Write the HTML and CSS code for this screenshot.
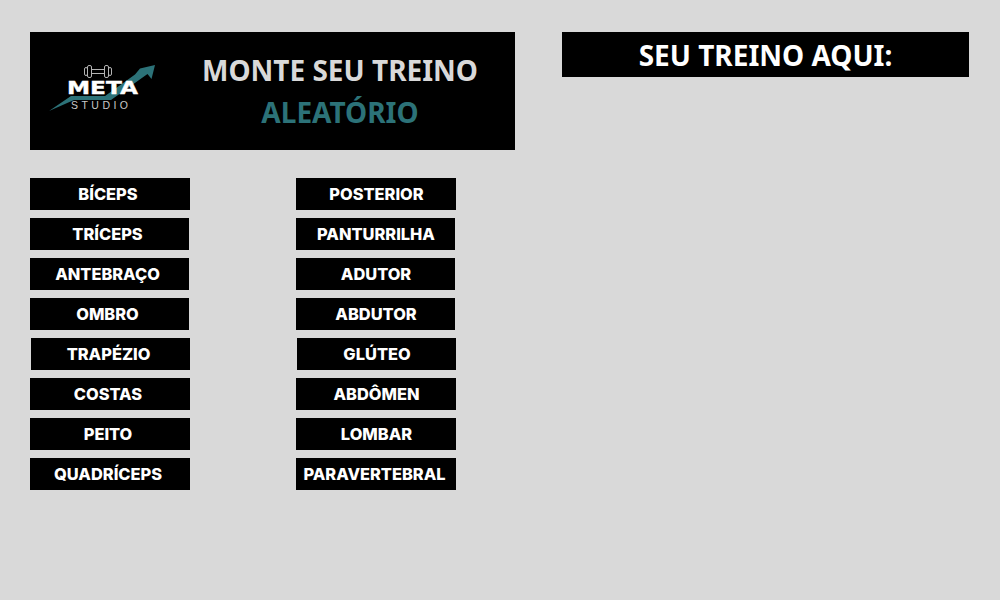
FILE: index.html
```html
<!DOCTYPE html>
<html lang="en">
<head>
    <meta charset="utf-8">
    <meta name="viewport" content="width=device-width, initial-scale=1">
    <title>Monte seu treino</title>
    <link rel="stylesheet" href="styles.css">
</head>
<body>

<div id="page">
    <div id="left">
        <div id="banner">
            <svg id="logo" width="120" height="60" viewBox="0 0 120 60">
                <g fill="none" stroke="#b4b4b4" stroke-width="1">
                    <rect x="35.5" y="6.5" width="3" height="8" rx="1.5"/>
                    <rect x="38.5" y="4.5" width="4" height="12" rx="1.5"/>
                    <rect x="55.5" y="4.5" width="4" height="12" rx="1.5"/>
                    <rect x="59.5" y="6.5" width="3" height="8" rx="1.5"/>
                    <path d="M42.5 8.5h13M42.5 12.5h13"/>
                </g>
                <path d="M0 50 L22 35 L56 35 L86 13.5 L91 7.5 L106 4 L102.5 18 L98.5 13 L62 39 L25 39 Z" fill="#2c7278"/>
                <text x="18" y="33" class="logo-meta" textLength="71" lengthAdjust="spacingAndGlyphs">META</text>
                <text x="22" y="47.5" class="logo-studio" textLength="57">STUDIO</text>
            </svg>
            <div id="heading">
                <h1>MONTE SEU TREINO</h1>
                <h2>ALEATÓRIO</h2>
            </div>
        </div>
        <div id="muscles">
            <div class="column first">
                <button class="muscle">BÍCEPS</button>
                <button class="muscle tight">TRÍCEPS</button>
                <button class="muscle tight">ANTEBRAÇO</button>
                <button class="muscle tight">OMBRO</button>
                <button class="muscle tight shifted">TRAPÉZIO</button>
                <button class="muscle">COSTAS</button>
                <button class="muscle">PEITO</button>
                <button class="muscle">QUADRÍCEPS</button>
            </div>
            <div class="column second">
                <button class="muscle">POSTERIOR</button>
                <button class="muscle tight">PANTURRILHA</button>
                <button class="muscle tight">ADUTOR</button>
                <button class="muscle tight">ABDUTOR</button>
                <button class="muscle tight shifted">GLÚTEO</button>
                <button class="muscle">ABDÔMEN</button>
                <button class="muscle">LOMBAR</button>
                <button class="muscle long">PARAVERTEBRAL</button>
            </div>
        </div>
    </div>
    <div id="result">SEU TREINO AQUI:</div>
</div>

</body>
</html>
```

FILE: styles.css
```css
body {
    margin: 0;
    background: #d9d9d9;
    font-family: "Noto Sans", sans-serif;
    overflow: hidden;
}

#page {
    display: flex;
    align-items: flex-start;
    padding: 32px 31px 0 30px;
    gap: 47px;
}

#left {
    width: 485px;
    flex: none;
}

#banner {
    height: 118px;
    background: #000;
    display: flex;
    align-items: center;
}

#logo {
    flex: none;
    margin-left: 19px;
}

.logo-meta {
    font-family: "DejaVu Sans", sans-serif;
    font-weight: 700;
    font-size: 18px;
    fill: #fff;
    stroke: #fff;
    stroke-width: 0.4px;
}

.logo-studio {
    font-family: "Liberation Sans", sans-serif;
    font-size: 10.5px;
    fill: #c8c8c8;
}

#heading {
    width: 275px;
    margin-left: 33px;
    text-align: center;
}

#heading h1 {
    margin: 0;
    color: #d9d9d9;
    font-size: 28px;
    line-height: 38px;
    font-weight: 700;
    white-space: nowrap;
}

#heading h2 {
    margin: 4px 0 0;
    padding-left: 1px;
    color: #2c7278;
    font-size: 28px;
    line-height: 38px;
    font-weight: 700;
}

#muscles {
    display: flex;
    gap: 106px;
    margin-top: 28px;
}

.column {
    display: flex;
    flex-direction: column;
    gap: 8px;
    width: 160px;
}

.muscle {
    display: block;
    width: 160px;
    height: 32px;
    padding: 0 0 1px;
    border: 0;
    background: #000;
    color: #fff;
    font-family: Inter, sans-serif;
    font-size: 16.4px;
    font-weight: 800;
    text-align: center;
}

.first .muscle {
    padding-right: 4px;
}

.second .muscle {
    padding-left: 1px;
}

.tight {
    width: 159px;
}

.shifted {
    margin-left: 1px;
}

.second .long {
    padding: 0 3px 1px 0;
}

#result {
    width: 407px;
    height: 45px;
    background: #000;
    color: #fff;
    font-size: 28px;
    font-weight: 700;
    line-height: 47px;
    text-align: center;
}
```
